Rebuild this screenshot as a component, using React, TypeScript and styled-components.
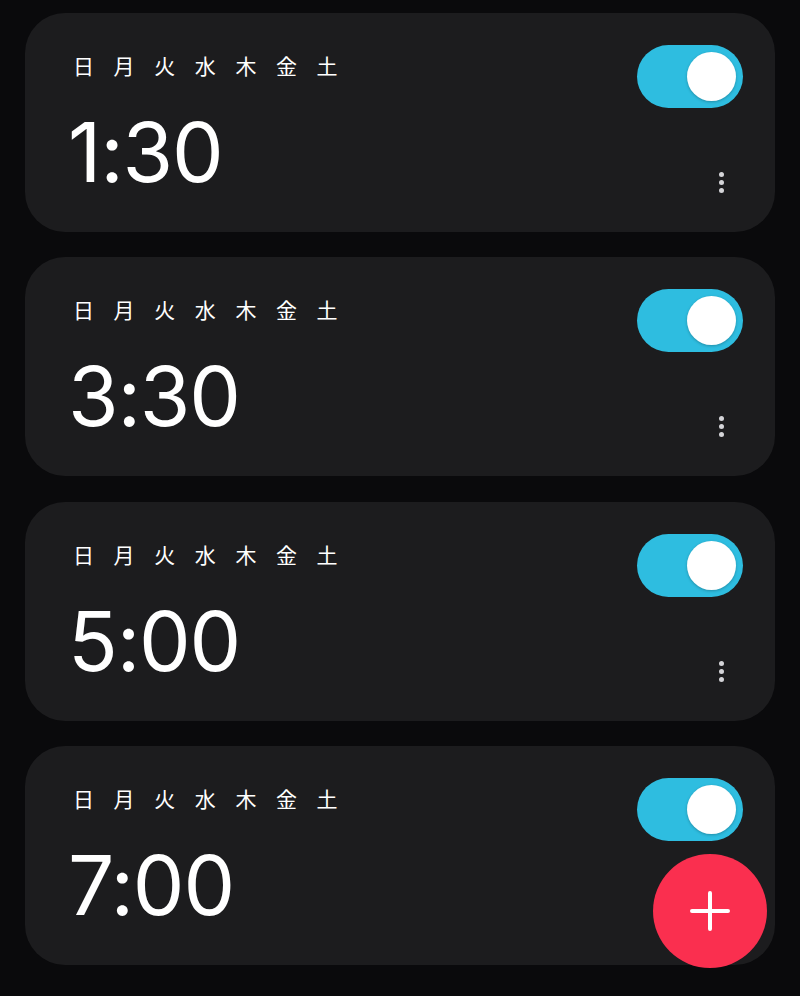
import React, { useState } from "react";
import styled, { createGlobalStyle } from "styled-components";

const GlobalStyle = createGlobalStyle`
  html, body {
    margin: 0;
    padding: 0;
    background-color: #0a0a0c;
  }
  * {
    box-sizing: border-box;
  }
`;

const Screen = styled.div`
  position: relative;
  width: 800px;
  height: 996px;
  overflow: hidden;
  background-color: #0a0a0c;
  padding: 13px 25px 0;
  display: flex;
  flex-direction: column;
  gap: 25.3px;
  font-family: Inter, "Noto Sans", sans-serif;
`;

const Card = styled.div`
  height: 219px;
  flex-shrink: 0;
  border-radius: 40px;
  background-color: #1c1c1e;
  padding: 32px 32px 39px 50px;
  display: flex;
  justify-content: space-between;
`;

const Info = styled.div`
  display: flex;
  flex-direction: column;
`;

const Days = styled.div`
  display: flex;
  gap: 19.6px;
  margin-top: 8px;
  margin-left: -2px;
`;

const Day = styled.span<{ $active: boolean }>`
  font-family: "Noto Sans CJK JP", sans-serif;
  font-size: 21px;
  line-height: 24px;
  color: ${(props) => (props.$active ? "#ffffff" : "#6e6e73")};
`;

const Time = styled.div`
  font-family: Inter, "Liberation Sans", sans-serif;
  font-size: 82px;
  font-weight: 400;
  line-height: 82px;
  letter-spacing: -1.2px;
  color: #ffffff;
  margin-top: 35px;
  margin-left: -7px;
`;

const Controls = styled.div`
  display: flex;
  flex-direction: column;
  align-items: flex-end;
  justify-content: space-between;
`;

const Track = styled.button<{ $on: boolean }>`
  width: 106px;
  height: 63px;
  border: none;
  border-radius: 32px;
  padding: 7px;
  display: flex;
  justify-content: ${(props) => (props.$on ? "flex-end" : "flex-start")};
  align-items: center;
  background-color: ${(props) => (props.$on ? "#2ebde0" : "#3a3a3c")};
  cursor: pointer;
`;

const Knob = styled.span`
  width: 49px;
  height: 49px;
  border-radius: 50%;
  background-color: #ffffff;
  box-shadow: 0 1px 3px rgba(0, 0, 0, 0.25);
`;

const MenuButton = styled.button`
  border: none;
  background: none;
  padding: 0;
  margin-right: 19px;
  display: flex;
  flex-direction: column;
  gap: 3px;
  cursor: pointer;
`;

const Dot = styled.span`
  width: 5px;
  height: 5px;
  border-radius: 50%;
  background-color: #d4d4d8;
`;

const Fab = styled.button`
  position: absolute;
  right: 33px;
  bottom: 28px;
  width: 114px;
  height: 114px;
  border-radius: 50%;
  border: none;
  background-color: #fa2f4f;
  display: flex;
  align-items: center;
  justify-content: center;
  cursor: pointer;
`;

const DAYS = ["日", "月", "火", "水", "木", "金", "土"];
const ALARMS = ["1:30", "3:30", "5:00", "7:00"];

function AlarmCard({ time }: { time: string }) {
  const [on, setOn] = useState(true);
  return (
    <Card>
      <Info>
        <Days>
          {DAYS.map((d) => (
            <Day key={d} $active>
              {d}
            </Day>
          ))}
        </Days>
        <Time>{time}</Time>
      </Info>
      <Controls>
        <Track $on={on} onClick={() => setOn(!on)}>
          <Knob />
        </Track>
        <MenuButton>
          <Dot />
          <Dot />
          <Dot />
        </MenuButton>
      </Controls>
    </Card>
  );
}

export default function App() {
  return (
    <>
      <GlobalStyle />
      <Screen>
        {ALARMS.map((t) => (
          <AlarmCard key={t} time={t} />
        ))}
        <Fab>
          <svg width="40" height="40" viewBox="0 0 40 40">
            <path d="M20 2v36M2 20h36" stroke="#ffffff" strokeWidth="4" strokeLinecap="round" />
          </svg>
        </Fab>
      </Screen>
    </>
  );
}
